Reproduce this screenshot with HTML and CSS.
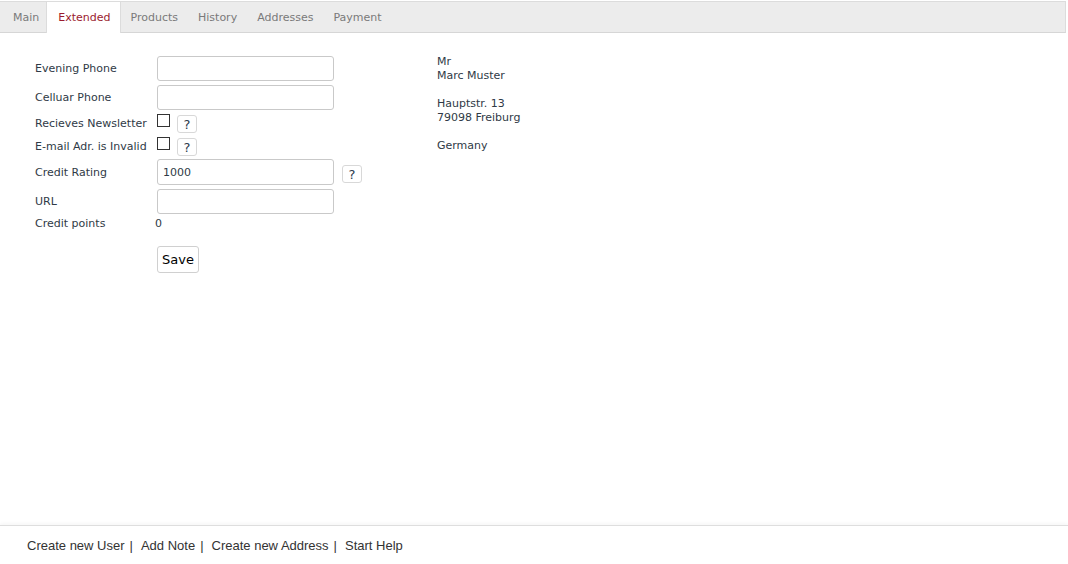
FILE: index.html
```html
<!DOCTYPE html>
<html>
<head>
<meta charset="utf-8">
<link rel="stylesheet" href="styles.css">
</head>
<body>
<div class="page">
  <div class="tabs">
    <span class="tab first">Main</span>
    <span class="tab active">Extended</span>
    <span class="tab">Products</span>
    <span class="tab">History</span>
    <span class="tab">Addresses</span>
    <span class="tab">Payment</span>
  </div>
  <div class="content">
    <div class="form">
      <div class="row row-input r1">
        <label class="lbl">Evening Phone</label>
        <input class="txt" type="text">
      </div>
      <div class="row row-input r2">
        <label class="lbl">Celluar Phone</label>
        <input class="txt" type="text">
      </div>
      <div class="row row-check">
        <label class="lbl">Recieves Newsletter</label>
        <span class="cb"></span>
        <span class="help">?</span>
      </div>
      <div class="row row-check r4">
        <label class="lbl">E-mail Adr. is Invalid</label>
        <span class="cb"></span>
        <span class="help">?</span>
      </div>
      <div class="row row-input r5">
        <label class="lbl">Credit Rating</label>
        <input class="txt" type="text" value="1000">
        <span class="help help-wide">?</span>
      </div>
      <div class="row row-input r6">
        <label class="lbl">URL</label>
        <input class="txt" type="text">
      </div>
      <div class="row row-text">
        <label class="lbl">Credit points</label>
        <span class="val">0</span>
      </div>
      <div class="row row-save">
        <span class="lbl"></span>
        <button class="save">Save</button>
      </div>
    </div>
    <div class="address">
      <div>Mr</div>
      <div>Marc Muster</div>
      <div class="blank"></div>
      <div>Hauptstr. 13</div>
      <div>79098 Freiburg</div>
      <div class="blank"></div>
      <div>Germany</div>
    </div>
  </div>
  <div class="footer">
    <a class="flink">Create new User</a><span class="sep">|</span>
    <a class="flink">Add Note</a><span class="sep">|</span>
    <a class="flink">Create new Address</a><span class="sep">|</span>
    <a class="flink">Start Help</a>
  </div>
</div>
</body>
</html>
```
FILE: styles.css
```css
html, body {
  margin: 0;
  padding: 0;
  background: #fff;
}
body {
  font-family: "DejaVu Sans", Tahoma, sans-serif;
  font-size: 11px;
  color: #2f3a46;
}
.page {
  width: 1068px;
  height: 564px;
  display: flex;
  flex-direction: column;
}
.tabs {
  margin-top: 1px;
  width: 1065px;
  height: 30px;
  background: #ececec;
  border-top: 1px solid #dcdcdc;
  border-bottom: 1px solid #d6d6d6;
  border-right: 1px solid #dcdcdc;
  display: flex;
  align-items: stretch;
}
.tab {
  display: flex;
  align-items: center;
  padding: 0 10px;
  color: #7a7a7a;
}
.tab.first {
  padding-left: 13px;
  padding-right: 7px;
}
.tab.active {
  background: #fff;
  color: #9b1b2e;
  border-left: 1px solid #dcdcdc;
  border-right: 1px solid #dcdcdc;
  margin-bottom: -1px;
  padding: 0 9px 1px 11px;
}
.content {
  flex: 1;
  display: flex;
  padding-top: 23px;
  padding-left: 35px;
}
.form {
  width: 402px;
  display: flex;
  flex-direction: column;
}
.row {
  display: flex;
  align-items: center;
}
.lbl {
  width: 122px;
  flex: none;
}
.row-input {
  height: 25px;
  margin-bottom: 4px;
}
.r2 { margin-bottom: 2px; }
.row-check {
  height: 22px;
  margin-bottom: 1px;
}
.r4 { margin-bottom: 2px; }
.r5 { height: 26px; }
.r6 { margin-bottom: 2px; }
.row-text { height: 14px; }
.row-save {
  margin-top: 16px;
}
.txt {
  box-sizing: border-box;
  width: 177px;
  height: 100%;
  border: 1px solid #c9c9c9;
  border-radius: 3px;
  padding: 0 4px 0 5px;
  font-family: "DejaVu Sans", Tahoma, sans-serif;
  font-size: 11px;
  color: #2f3a46;
  background: #fff;
  margin: 0;
}
.cb {
  box-sizing: border-box;
  width: 13px;
  height: 13px;
  border: 1px solid #333;
  background: #fff;
  align-self: flex-start;
  margin-top: 2px;
}
.help {
  box-sizing: border-box;
  width: 20px;
  height: 18px;
  margin-left: 7px;
  border: 1px solid #d8d8d8;
  border-radius: 3px;
  display: flex;
  align-items: center;
  justify-content: center;
  font-family: "DejaVu Sans", sans-serif;
  font-size: 13px;
  font-weight: normal;
  color: #2c3a4c;
  align-self: flex-start;
  margin-top: 3px;
  padding-top: 1px;
}
.help-wide {
  margin-left: 8px;
  margin-top: 6px;
}
.val {
  margin-left: -2px;
}
.save {
  box-sizing: border-box;
  height: 27px;
  width: 42px;
  padding: 0;
  background: #fff;
  border: 1px solid #d0d0d0;
  border-radius: 3px;
  font-family: "DejaVu Sans", Tahoma, sans-serif;
  font-size: 13px;
  color: #000;
}
.address {
  line-height: 14px;
  margin-top: -1px;
}
.blank { height: 14px; }
.footer {
  height: 38px;
  border-top: 1px solid #dedede;
  box-shadow: 0 -2px 3px rgba(0,0,0,0.03);
  display: flex;
  align-items: center;
  padding-left: 27px;
  font-family: "Liberation Sans", Arial, sans-serif;
  font-size: 13px;
  color: #333;
}
.flink {
  color: #333;
}
.sep {
  margin: 0 8px 0 5px;
  color: #333;
}
```
